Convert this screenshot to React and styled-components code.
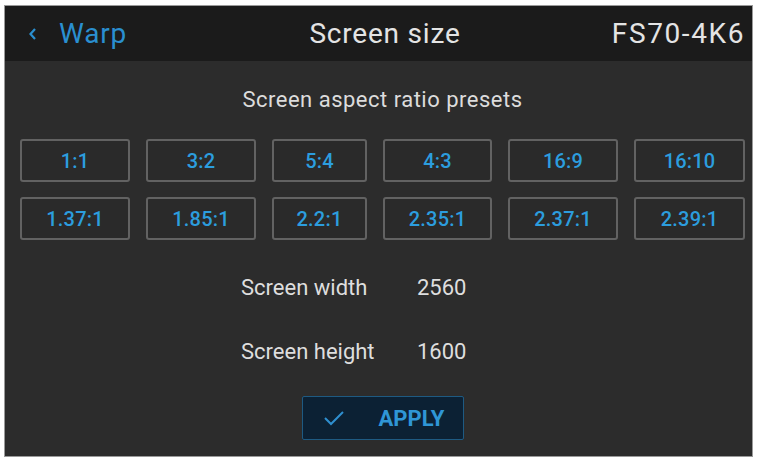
import React from 'react';
import styled, { createGlobalStyle } from 'styled-components';

const presets = [
  ['1:1', '3:2', '5:4', '4:3', '16:9', '16:10'],
  ['1.37:1', '1.85:1', '2.2:1', '2.35:1', '2.37:1', '2.39:1'],
];

const GlobalStyle = createGlobalStyle`
  html, body {
    margin: 0;
    background: #ffffff;
  }
  body {
    font-family: Roboto, "Liberation Sans", sans-serif;
  }
`;

export default function App() {
  return (
    <>
      <GlobalStyle />
      <Frame>
        <Panel>
          <Header>
            <BackLink>
              <svg width="10" height="14" viewBox="0 0 10 14">
                <polyline points="7,2 2.5,7 7,12" fill="none" stroke="#2a8fd0" strokeWidth="2.2" />
              </svg>
              Warp
            </BackLink>
            <Title>Screen size</Title>
            <Model>FS70-4K6</Model>
          </Header>

          <Body>
            <Subtitle>Screen aspect ratio presets</Subtitle>
            <PresetGrid>
              {presets.flat().map((p) => (
                <Preset key={p}>{p}</Preset>
              ))}
            </PresetGrid>

            <Fields>
              <Label>Screen width</Label>
              <Value>2560</Value>
              <Label>Screen height</Label>
              <Value>1600</Value>
            </Fields>

            <ApplyButton>
              <svg width="22" height="16" viewBox="0 0 22 16">
                <polyline points="2,8 8,14 20,2" fill="none" stroke="#2f8fcf" strokeWidth="2" />
              </svg>
              <span>APPLY</span>
            </ApplyButton>
          </Body>
        </Panel>
      </Frame>
    </>
  );
}

const Frame = styled.div`
  width: 757px;
  height: 459px;
  padding: 6px 5px 3px 5px;
  box-sizing: border-box;
  background: #ffffff;
`;

const Panel = styled.div`
  width: 747px;
  height: 450px;
  background: #2c2c2c;
  display: flex;
  flex-direction: column;
  box-shadow: 0 0 0 1px #9a9a9a;
`;

const Header = styled.div`
  height: 55px;
  background: #1b1b1b;
  display: grid;
  grid-template-columns: 1fr auto 1fr;
  align-items: center;
  padding: 0 7px 0 23px;
  font-size: 28px;
  letter-spacing: 0.8px;
  color: #e4e4e4;
`;

const BackLink = styled.div`
  display: flex;
  align-items: center;
  gap: 21px;
  color: #2a8fd0;
`;

const Title = styled.div`
  text-align: center;
  padding-right: 3px;
`;

const Model = styled.div`
  text-align: right;
  letter-spacing: 1.6px;
`;

const Body = styled.div`
  flex: 1;
  display: flex;
  flex-direction: column;
  padding: 0 7px 0 15px;
`;

const Subtitle = styled.div`
  margin-top: 27px;
  height: 24px;
  line-height: 24px;
  text-align: center;
  font-size: 22px;
  letter-spacing: 0.5px;
  color: #dcdcdc;
`;

const PresetGrid = styled.div`
  margin-top: 27px;
  display: grid;
  grid-template-columns: 110px 110px 95px 109px 110px 111px;
  grid-auto-rows: 43px;
  column-gap: 16px;
  row-gap: 15px;
`;

const Preset = styled.div`
  display: flex;
  align-items: center;
  justify-content: center;
  border: 2px solid #626262;
  border-radius: 3px;
  background: #2a2a2a;
  color: #2c9dde;
  font-size: 20px;
  font-weight: 500;
  letter-spacing: 0.2px;
`;

const Fields = styled.div`
  margin-top: 36px;
  padding-left: 221px;
  display: grid;
  grid-template-columns: 176px auto;
  grid-auto-rows: 24px;
  row-gap: 40px;
  font-size: 22px;
  line-height: 24px;
  color: #dedede;
`;

const Label = styled.div``;

const Value = styled.div``;

const ApplyButton = styled.div`
  margin-top: 32px;
  align-self: center;
  width: 162px;
  height: 44px;
  box-sizing: border-box;
  border: 1px solid #1e5a82;
  border-radius: 2px;
  background: #0c2134;
  display: flex;
  align-items: center;
  padding-left: 20px;
  gap: 34px;
  color: #2f96d6;
  font-size: 22px;
  font-weight: 700;
`;
